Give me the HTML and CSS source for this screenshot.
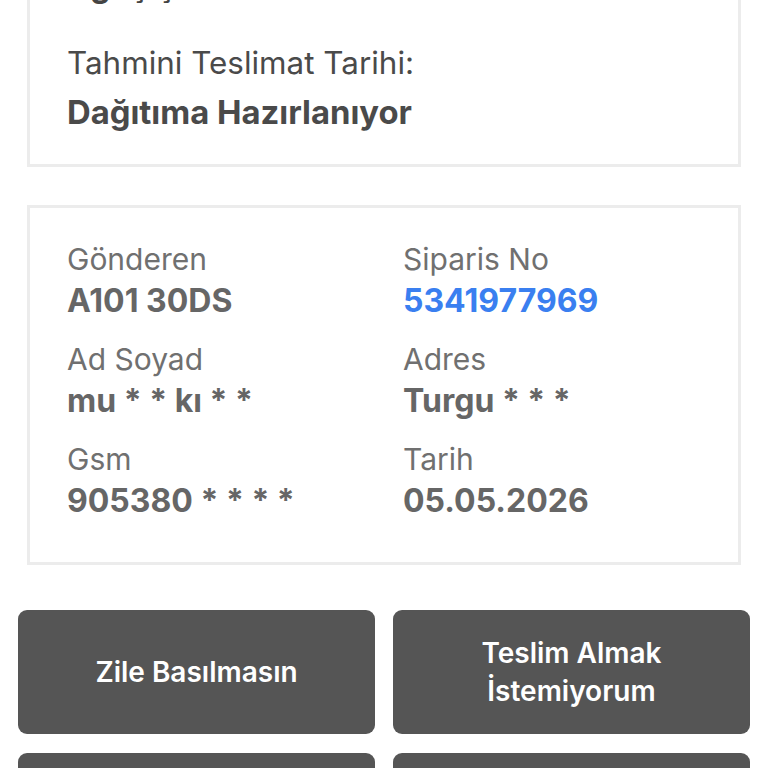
FILE: index.html
```
<!DOCTYPE html>
<html lang="tr">
<head>
<meta charset="utf-8">
<link rel="stylesheet" href="styles.css">
</head>
<body>
<div class="page">
  <section class="card card-status">
    <p class="status-title">Ağaç Şubesi</p>
    <p class="status-label">Tahmini Teslimat Tarihi:</p>
    <p class="status-value">Dağıtıma Hazırlanıyor</p>
  </section>

  <section class="card card-info">
    <div class="info-grid">
      <div class="info-item">
        <div class="info-label">Gönderen</div>
        <div class="info-value">A101 30DS</div>
      </div>
      <div class="info-item">
        <div class="info-label">Siparis No</div>
        <div class="info-value link">5341977969</div>
      </div>
      <div class="info-item">
        <div class="info-label">Ad Soyad</div>
        <div class="info-value">mu * * kı * *</div>
      </div>
      <div class="info-item">
        <div class="info-label">Adres</div>
        <div class="info-value">Turgu * * *</div>
      </div>
      <div class="info-item">
        <div class="info-label">Gsm</div>
        <div class="info-value">905380 * * * *</div>
      </div>
      <div class="info-item">
        <div class="info-label">Tarih</div>
        <div class="info-value">05.05.2026</div>
      </div>
    </div>
  </section>

  <div class="actions">
    <button class="action">Zile Basılmasın</button>
    <button class="action">Teslim Almak<br>İstemiyorum</button>
    <button class="action">Komşuya Bırakın</button>
    <button class="action">Kapıya Bırakın</button>
  </div>
</div>
</body>
</html>
```

FILE: styles.css
```
html, body {
  margin: 0;
  padding: 0;
  background: #ffffff;
}
body {
  font-family: Inter, "Noto Sans", "Liberation Sans", sans-serif;
  overflow: hidden;
  height: 768px;
}
.page {
  display: flex;
  flex-direction: column;
}
.card {
  margin: 0 27px;
  border: 3px solid #ececec;
  background: #fff;
}
.card-status {
  margin-top: -50px;
  padding: 0 37px 27px;
}
.card-status p {
  margin: 0;
}
.status-title {
  font-size: 32px;
  font-weight: 700;
  color: #444;
  line-height: 49px;
  padding-top: 8px;
  margin-bottom: 29px !important;
}
.status-label {
  font-size: 31.4px;
  font-weight: 400;
  color: #4a4a4a;
  line-height: 49px;
}
.status-value {
  font-size: 32.8px;
  font-weight: 700;
  color: #4a4a4a;
  line-height: 49px;
}
.card-info {
  margin-top: 38px;
  padding: 30px 0 24px 37px;
}
.info-grid {
  display: grid;
  grid-template-columns: 336px 1fr;
}
.info-item {
  margin-bottom: 16px;
}
.info-label {
  font-size: 30px;
  line-height: 42px;
  color: #707070;
  font-weight: 400;
}
.info-value {
  font-size: 32px;
  line-height: 42px;
  color: #666;
  font-weight: 700;
}
.info-value.link {
  color: #3a7ff0;
}
.actions {
  margin-top: 45px;
  padding: 0 18px;
  display: grid;
  grid-template-columns: 1fr 1fr;
  column-gap: 18px;
  row-gap: 19px;
}
.action {
  height: 124px;
  border: none;
  border-radius: 9px;
  background: #555555;
  color: #fff;
  font-family: inherit;
  font-size: 28px;
  font-weight: 600;
  line-height: 38px;
  padding: 0 10px;
}
```
